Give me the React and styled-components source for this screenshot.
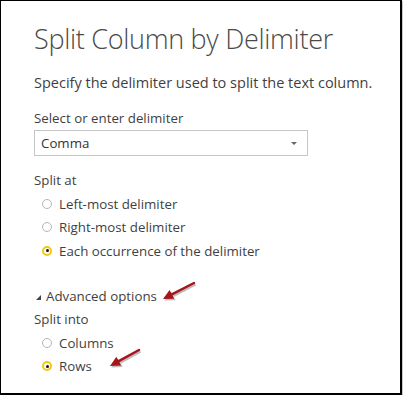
import React from 'react'
import styled, { createGlobalStyle } from 'styled-components'

const Global = createGlobalStyle`
  body {
    margin: 0;
    background: #fff;
    font-family: "Open Sans", "Liberation Sans", sans-serif;
  }
`

const Frame = styled.div`
  position: relative;
  box-sizing: border-box;
  width: 402px;
  height: 395px;
  border-top: 1px solid #000;
  border-left: 1px solid #000;
  border-right: 2px solid #000;
  border-bottom: 2px solid #000;
  box-shadow: 1px 1px 0 #c8c8c8;
  padding: 20px 0 0 33px;
  color: #3f3f3f;
`

const Title = styled.h1`
  margin: 0;
  font-weight: 300;
  font-size: 27px;
  line-height: 36px;
  color: #4a4a4a;
  letter-spacing: -0.3px;
`

const Text = styled.div`
  font-size: ${p => p.$size || 13.3}px;
  line-height: ${p => p.$lh || 24}px;
  margin-top: ${p => p.$gap || 0}px;
`

const Select = styled.div`
  box-sizing: border-box;
  width: 274px;
  height: 26px;
  border: 1px solid #c6c6c6;
  display: flex;
  align-items: center;
  justify-content: space-between;
  padding: 0 10px 0 6px;
  font-size: 13.3px;
  color: #333;
`

const Caret = styled.span`
  width: 0;
  height: 0;
  border-left: 3px solid transparent;
  border-right: 3px solid transparent;
  border-top: 3px solid #666;
`

const Options = styled.div`
  display: flex;
  flex-direction: column;
`

const Option = styled.div`
  display: flex;
  align-items: center;
  height: 23.5px;
  padding-left: 8px;
  font-size: 13.3px;
`

const Radio = styled.span`
  box-sizing: border-box;
  width: 10px;
  height: 10px;
  border-radius: 50%;
  margin-right: 7px;
  border: 1px solid ${p => (p.$on ? '#f2c811' : '#b5b5b5')};
  border-width: ${p => (p.$on ? '2px' : '1px')};
  display: flex;
  align-items: center;
  justify-content: center;
  &::after {
    content: '';
    width: 3px;
    height: 3px;
    border-radius: 50%;
    background: ${p => (p.$on ? '#111' : 'transparent')};
  }
`

const Toggle = styled.div`
  display: flex;
  align-items: center;
  height: 23.5px;
  margin-top: 21.5px;
  font-size: 13.3px;
`

const Tri = styled.span`
  width: 0;
  height: 0;
  margin: 3px 5px 0 2px;
  border-left: 5px solid transparent;
  border-bottom: 5px solid #444;
`

const Arrows = styled.svg`
  position: absolute;
  left: 0;
  top: 0;
  pointer-events: none;
`

const Arrow = ({ x1, y1, x2, y2 }) => {
  const a = Math.atan2(y2 - y1, x2 - x1)
  const len = 10
  const w = 5
  const bx = x2 - Math.cos(a) * len
  const by = y2 - Math.sin(a) * len
  const px = -Math.sin(a) * w
  const py = Math.cos(a) * w
  return (
    <g>
      <g transform="translate(1.5,1.5)" opacity="0.25" fill="#000" stroke="#000">
        <line x1={x1} y1={y1} x2={bx} y2={by} strokeWidth="2.5" />
        <polygon points={`${x2},${y2} ${bx + px},${by + py} ${bx - px},${by - py}`} stroke="none" />
      </g>
      <line x1={x1} y1={y1} x2={bx} y2={by} stroke="#a5161c" strokeWidth="2.5" strokeLinecap="round" />
      <polygon points={`${x2},${y2} ${bx + px},${by + py} ${bx - px},${by - py}`} fill="#a5161c" />
    </g>
  )
}

const splitAt = [
  ['Left-most delimiter', false],
  ['Right-most delimiter', false],
  ['Each occurrence of the delimiter', true],
]

const splitInto = [
  ['Columns', false],
  ['Rows', true],
]

export default function App() {
  return (
    <>
      <Global />
      <Frame>
        <Title>Split Column by Delimiter</Title>
        <Text $gap={14} $size={14.5}>Specify the delimiter used to split the text column.</Text>
        <Text $gap={11}>Select or enter delimiter</Text>
        <Select>
          <span>Comma</span>
          <Caret />
        </Select>
        <Text $gap={12}>Split at</Text>
        <Options>
          {splitAt.map(([label, on]) => (
            <Option key={label}>
              <Radio $on={on} />
              {label}
            </Option>
          ))}
        </Options>
        <Toggle>
          <Tri />
          Advanced options
        </Toggle>
        <Text $lh={23.5}>Split into</Text>
        <Options>
          {splitInto.map(([label, on]) => (
            <Option key={label}>
              <Radio $on={on} />
              {label}
            </Option>
          ))}
        </Options>
        <Arrows width="402" height="395">
          <Arrow x1={193} y1={282} x2={162} y2={298} />
          <Arrow x1={138} y1={349} x2={109} y2={365} />
        </Arrows>
      </Frame>
    </>
  )
}
